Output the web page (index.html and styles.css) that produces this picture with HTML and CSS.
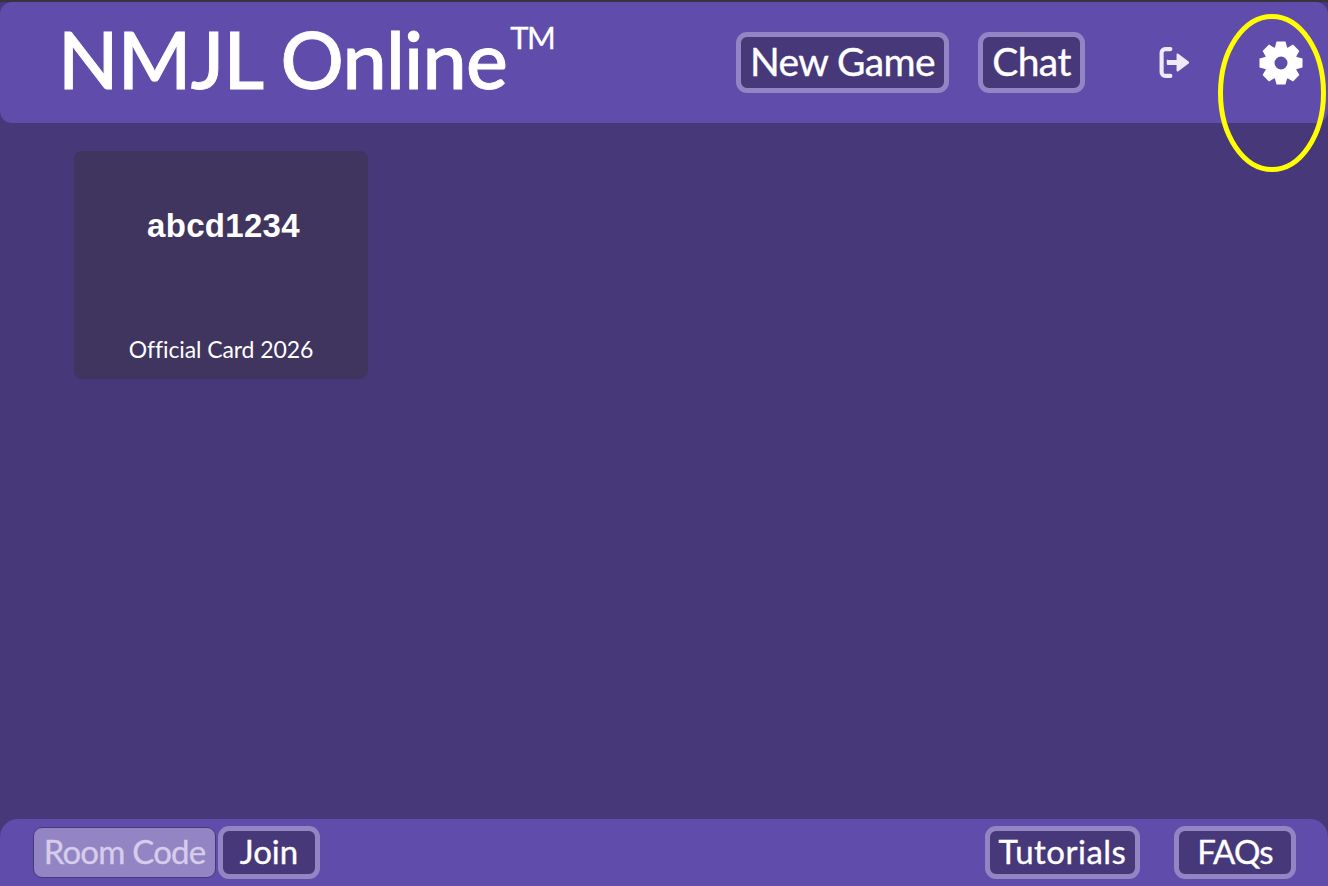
FILE: index.html
```html
<!DOCTYPE html>
<html lang="en">
<head>
<meta charset="utf-8">
<title>NMJL Online</title>
<link rel="stylesheet" href="styles.css">
</head>
<body>
<div class="app">
  <header class="topbar">
    <h1 class="brand">NMJL Online<sup class="tm">TM</sup></h1>
    <nav class="top-actions">
      <button class="btn btn-lg new-game">New Game</button>
      <button class="btn btn-lg chat">Chat</button>
      <svg class="icon logout" viewBox="0 0 32 32" aria-label="Log out">
        <path d="M12 3H7a3.500 3.500 0 0 0-3.500 3.500v19A3.500 3.500 0 0 0 7 29h5" fill="none" stroke="#eeeaf8" stroke-width="4" stroke-linecap="round"/>
        <path d="M9.500 13.500H18V8.200a1 1 0 0 1 1.700-.7l10 7.500a1.300 1.300 0 0 1 0 2l-10 7.500a1 1 0 0 1-1.700-.7v-5.300H9.500a1 1 0 0 1-1-1v-3.500a1 1 0 0 1 1-1z" fill="#eeeaf8"/>
      </svg>
      <svg class="icon gear" viewBox="-22 -22 44 44" aria-label="Settings">
        <circle r="11.500" fill="none" stroke="#fff" stroke-width="10"/>
        <g fill="#fff">
          <path d="M-6.500-14-4.500-21.500H4.500L6.500-14z"/>
          <path d="M-6.500-14-4.500-21.500H4.500L6.500-14z" transform="rotate(45)"/>
          <path d="M-6.500-14-4.500-21.500H4.500L6.500-14z" transform="rotate(90)"/>
          <path d="M-6.500-14-4.500-21.500H4.500L6.500-14z" transform="rotate(135)"/>
          <path d="M-6.500-14-4.500-21.500H4.500L6.500-14z" transform="rotate(180)"/>
          <path d="M-6.500-14-4.500-21.500H4.500L6.500-14z" transform="rotate(225)"/>
          <path d="M-6.500-14-4.500-21.500H4.500L6.500-14z" transform="rotate(270)"/>
          <path d="M-6.500-14-4.500-21.500H4.500L6.500-14z" transform="rotate(315)"/>
        </g>
      </svg>
    </nav>
  </header>
  <main class="content">
    <article class="game-card">
      <div class="game-name">abcd1234</div>
      <div class="game-type">Official Card 2026</div>
    </article>
  </main>
  <footer class="bottombar">
    <div class="join-group">
      <div class="room-input">Room Code</div>
      <button class="btn btn-sm join">Join</button>
    </div>
    <div class="help-group">
      <button class="btn btn-sm tutorials">Tutorials</button>
      <button class="btn btn-sm faqs">FAQs</button>
    </div>
  </footer>
  <svg class="highlight" viewBox="0 0 114 164" aria-hidden="true">
    <ellipse cx="57" cy="82" rx="51.500" ry="76.500" fill="none" stroke="#ffff00" stroke-width="5"/>
  </svg>
</div>
</body>
</html>
```
FILE: styles.css
```css
* { box-sizing: border-box; }
html, body { margin: 0; height: 100%; }
body { background: #47387a; font-family: Lato, "Noto Sans", sans-serif; color: #fff; overflow: hidden; }
.app { position: relative; height: 886px; display: flex; flex-direction: column; border-top: 2px solid #37343f; }
.topbar { height: 121px; flex: none; background: #604caa; border-radius: 12px; display: flex; align-items: flex-start; justify-content: space-between; padding: 0 25px 0 58px; }
.brand { margin: 15px 0 0; font-size: 79px; line-height: 84px; font-weight: 500; letter-spacing: -.7px; -webkit-text-stroke: .9px #fff; white-space: nowrap; display: flex; }
.tm { font-size: 31px; line-height: 32px; font-weight: 400; letter-spacing: -1.500px; -webkit-text-stroke: .3px #fff; margin: 4px 0 0 3px; }
.top-actions { display: flex; align-items: center; margin-top: 30px; }
.btn { font-family: inherit; color: #fff; background: #47387a; border: 5px solid #9384c4; border-radius: 11px; padding: 0 0 3px; white-space: nowrap; -webkit-text-stroke: .35px #fff; }
.btn-lg { height: 61px; font-size: 39px; line-height: 48px; letter-spacing: -.6px; }
.btn-sm { height: 53px; padding-bottom: 5px; font-size: 33px; line-height: 40px; }
.new-game { width: 213px; }
.chat { width: 107px; margin-left: 29px; }
.icon { display: block; flex: none; }
.logout { width: 33px; height: 33px; margin-left: 73px; }
.gear { width: 44px; height: 44px; margin-left: 68px; }
.content { flex: 1; padding: 28px 74px; }
.game-card { width: 294px; height: 228px; background: #3f355f; border-radius: 8px; display: flex; flex-direction: column; align-items: center; }
.game-name { margin-top: 56px; margin-left: 5px; font-family: "Liberation Sans", sans-serif; font-weight: 700; font-size: 33px; line-height: 38px; letter-spacing: .3px; }
.game-type { margin-top: auto; margin-bottom: 15px; font-size: 23px; line-height: 29px; letter-spacing: -.1px; }
.bottombar { height: 67px; flex: none; background: #604caa; border-radius: 18px 18px 0 0; display: flex; align-items: center; justify-content: space-between; padding: 0 32px 0 33px; }
.join-group, .help-group { display: flex; align-items: center; }
.room-input { width: 183px; height: 51px; padding-bottom: 2px; background: #9384c4; border: 1.500px solid #47387a; border-radius: 9px; color: #d5cdeb; font-size: 33px; line-height: 46px; letter-spacing: -.8px; -webkit-text-stroke: .35px #d5cdeb; text-align: center; }
.join { width: 102px; margin-left: 2px; }
.tutorials { width: 155px; letter-spacing: .5px; }
.faqs { width: 122px; margin-left: 34px; letter-spacing: -.8px; }
.highlight { position: absolute; top: 9px; right: -1px; width: 114px; height: 164px; }
```
